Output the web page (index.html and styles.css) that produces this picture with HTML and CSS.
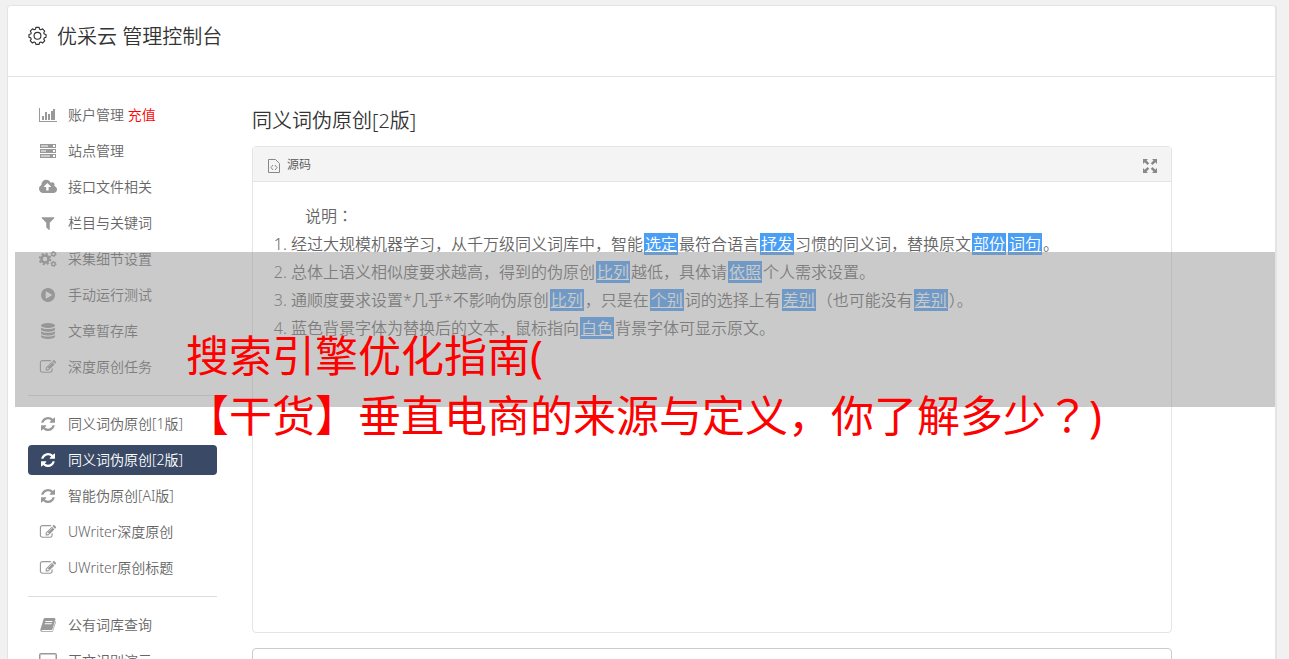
FILE: index.html
```html
<!DOCTYPE html>
<html lang="zh-CN">
<head>
  <meta charset="UTF-8">
  <meta name="viewport" content="width=device-width, initial-scale=1.0">
  <title>优采云 管理控制台</title>

  <link rel="stylesheet" href="styles.css">
</head>
<body>
  <!-- shared icons -->
  <svg class="sprite" aria-hidden="true">
    <symbol id="i-refresh" viewBox="128 18 1536 1756"><path d="M1639 1056q0 5-1 7-64 268-268 434.5t-478 166.5q-146 0-282.5-55t-243.5-157l-129 129q-19 19-45 19t-45-19-19-45v-448q0-26 19-45t45-19h448q26 0 45 19t19 45-19 45l-137 137q71 66 161 102t187 36q134 0 250-65t186-179q11-17 53-117 8-23 30-23h192q13 0 22.5 9.5t9.5 22.5zm25-800v448q0 26-19 45t-45 19h-448q-26 0-45-19t-19-45 19-45l138-138q-148-137-349-137-134 0-250 65t-186 179q-11 17-53 117-8 23-30 23h-199q-13 0-22.5-9.5t-9.5-22.5v-7q65-268 270-434.5t480-166.5q146 0 284 55.5t245 156.5l130-129q19-19 45-19t45 19 19 45z"/></symbol>
    <symbol id="i-edit" viewBox="0 18 1792 1756"><path d="M888 1184l116-116-152-152-116 116v56h96v96h56zm440-720q-16-16-33 1l-350 350q-17 17-1 33t33-1l350-350q17-17 1-33zm80 594v190q0 119-84.5 203.5t-203.5 84.5h-832q-119 0-203.5-84.5t-84.5-203.5v-832q0-119 84.5-203.5t203.5-84.5h832q63 0 117 25 15 7 18 23 3 17-9 29l-49 49q-14 14-32 8-23-6-45-6h-832q-66 0-113 47t-47 113v832q0 66 47 113t113 47h832q66 0 113-47t47-113v-126q0-13 9-22l64-64q15-15 35-7t20 29zm-96-738l288 288-672 672h-288v-288zm444 132l-92 92-288-288 92-92q28-28 68-28t68 28l152 152q28 28 28 68t-28 68z"/></symbol>
  </svg>

  <div class="wrapper">
    <div class="header">
      <svg class="gear" viewBox="0 0 20 20" aria-hidden="true">
        <path d="M8.3 1.5h3.4l.5 2 1.3.5 1.8-1 2.3 2.3-1 1.8.5 1.3 1.9.5v3l-1.9.6-.5 1.3 1 1.8-2.3 2.3-1.8-1-1.3.5-.5 1.9H8.3l-.5-1.9-1.3-.5-1.8 1-2.3-2.3 1-1.8-.5-1.3L1 11.9v-3l1.9-.5.5-1.3-1-1.8 2.3-2.3 1.8 1 1.3-.5z"/>
        <circle cx="10" cy="10.3" r="3.6"/>
      </svg>
      <h1>优采云 管理控制台</h1>
    </div>

    <div class="content">
      <div class="sidebar">
        <ul class="menu">
          <li><a href="#"><svg viewBox="0 0 18 14"><path d="M0 0h1v13h17v1H0zM3 8h2v4H3zM6 4h2v8H6zM9 6h2v6H9zM12 3h2v9h-2zM14 1h2v11h-2z"/></svg>账户管理 <span class="red">充值</span></a></li>
          <li><a href="#"><svg viewBox="0 0 18 14"><path fill-rule="evenodd" d="M1 0h16v4H1zM1 5h16v4H1zM1 10h16v4H1zM2 1v2h7V1zM2 6v2h5V6zM2 11v2h9v-2zM14 1v2h2V1zM14 6v2h2V6zM14 11v2h2v-2z"/><path opacity=".5" d="M2 1h12v2H2zM2 6h12v2H2zM2 11h12v2H2z"/></svg>站点管理</a></li>
          <li><a href="#"><svg viewBox="-64 128 1920 1536"><path d="M1216 864q0-14-9-23l-352-352q-9-9-23-9t-23 9l-351 351q-10 12-10 24 0 14 9 23t23 9h224v352q0 13 9.5 22.5t22.5 9.5h192q13 0 22.5-9.5t9.5-22.5v-352h224q13 0 22.5-9.5t9.5-22.5zm640 288q0 159-112.5 271.5t-271.5 112.5h-1088q-185 0-316.5-131.5t-131.5-316.5q0-130 70-240t188-165q-2-30-2-43 0-212 150-362t362-150q156 0 285.5 87t188.5 231q71-62 166-62 106 0 181 75t75 181q0 76-41 138 130 31 213.5 135.5t83.5 238.5z"/></svg>接口文件相关</a></li>
          <li><a href="#"><svg viewBox="128 18 1536 1756"><path d="M1595 295q17 41-14 70l-493 493v742q0 42-39 59-13 5-25 5-27 0-45-19l-256-256q-19-19-19-45v-486l-493-493q-31-29-14-70 17-39 59-39h1280q42 0 59 39z"/></svg>栏目与关键词</a></li>
          <li><a href="#"><svg viewBox="0 0 18 16"><g class="cog"><circle cx="6" cy="8" r="3.5" stroke-width="2.6"/><circle cx="6" cy="8" r="5.3" stroke-width="2" stroke-dasharray="2.1 2.063"/><circle cx="14.5" cy="3" r="1.8" stroke-width="1.4"/><circle cx="14.5" cy="3" r="2.6" stroke-width="1" stroke-dasharray="1.4 1.323"/><circle cx="14.5" cy="13" r="1.8" stroke-width="1.4"/><circle cx="14.5" cy="13" r="2.6" stroke-width="1" stroke-dasharray="1.4 1.323"/></g></svg>采集细节设置</a></li>
          <li><a href="#"><svg viewBox="128 18 1536 1756"><path d="M896 128q209 0 385.5 103t279.5 279.5 103 385.5-103 385.5-279.5 279.5-385.5 103-385.5-103-279.5-279.5-103-385.5 103-385.5 279.5-279.5 385.5-103zm384 823q32-18 32-55t-32-55l-544-320q-31-19-64-1-32 19-32 56v640q0 37 32 56 16 8 32 8 17 0 32-9z"/></svg>手动运行测试</a></li>
          <li><a href="#"><svg viewBox="0 0 14 16"><ellipse cx="7" cy="2.5" rx="7" ry="2.5"/><path d="M0 4.5c2 2 12 2 14 0v2c0 3-14 3-14 0zM0 8.3c2 2 12 2 14 0v2c0 3-14 3-14 0zM0 12c2 2 12 2 14 0v1.5c0 3.3-14 3.3-14 0z"/></svg>文章暂存库</a></li>
          <li><a href="#"><svg><use href="#i-edit"/></svg>深度原创任务</a></li>
        </ul>
        <hr>
        <ul class="menu">
          <li><a href="#"><svg><use href="#i-refresh"/></svg>同义词伪原创[1版]</a></li>
          <li><a href="#" class="active"><svg><use href="#i-refresh"/></svg>同义词伪原创[2版]</a></li>
          <li><a href="#"><svg><use href="#i-refresh"/></svg>智能伪原创[AI版]</a></li>
          <li><a href="#"><svg><use href="#i-edit"/></svg>UWriter深度原创</a></li>
          <li><a href="#"><svg><use href="#i-edit"/></svg>UWriter原创标题</a></li>
        </ul>
        <hr>
        <ul class="menu">
          <li><a href="#"><svg viewBox="-1 -1 18 16"><path fill-rule="evenodd" d="M5 0h9.5q1.2.3.9 1.5L12.5 11q-.4 1-1.4 1H2.5q-1 0-.9.7t.9.5h9.3q.6 0 .8-.7L15.5 3q.7.5.4 1.3L13 13q-.4 1-1.4 1H2.2Q.2 14 .3 11.8L3.500 1.200Q4 0 5 0zM5.500 3l-.3 1h7l.3-1zM4.900 5.300l-.3 1h7l.3-1z"/></svg>公有词库查询</a></li>
          <li><a href="#"><svg viewBox="0 0 18 16"><path fill-rule="evenodd" d="M2 0h14q2 0 2 2v9q0 2-2 2h-5v2h2v1H5v-1h2v-2H2q-2 0-2-2V2q0-2 2-2zM1.5 1.5v8h15v-8z"/></svg>正文识别演示</a></li>
        </ul>
      </div>

      <div class="main">
        <h2>同义词伪原创[2版]</h2>
        <div class="panel">
          <div class="toolbar">
            <button type="button" class="source">
              <svg viewBox="0 0 12 14" aria-hidden="true"><path d="M.5.5h7l4 4v9H.5zM5 6L3 8.500 5 11M7 6l2 2.500L7 11"/></svg>
              源码
            </button>
            <button type="button" class="expand" aria-label="全屏">
              <svg viewBox="0 0 14 14" aria-hidden="true"><path d="M0 0h5L3.500 1.500 6.200 4.200 4.500 6 1.700 3.300 0 5zM14 0v5l-1.700-1.700L9.500 6 7.800 4.200l2.700-2.700L9 0zM0 14V9l1.700 1.700L4.500 8l1.700 1.800-2.700 2.700L5 14zM14 14H9l1.500-1.500-2.700-2.700L9.500 8l2.800 2.700L14 9z"/></svg>
            </button>
          </div>
          <div class="editor">
            <p>说明<span class="mid" lang="zh-TW">：</span></p>
            <ol>
              <li>经过大规模机器学习，从千万级同义词库中，智能<u>选定</u>最符合语言<u>抒发</u>习惯的同义词，替换原文<u>部份</u><u>词句</u>。</li>
              <li>总体上语义相似度要求越高，得到的伪原创<u>比列</u>越低，具体请<u>依照</u>个人需求设置。</li>
              <li>通顺度要求设置*几乎*不影响伪原创<u>比列</u>，只是在<u>个别</u>词的选择上有<u>差别</u>（也可能没有<u>差别</u>）。</li>
              <li>蓝色背景字体为替换后的文本，鼠标指向<u>白色</u>背景字体可显示原文。</li>
            </ol>
          </div>
        </div>
        <textarea class="result" aria-label="结果"></textarea>
      </div>
    </div>
  </div>

  <div class="banner">
    <p>搜索引擎优化指南(<br>【干货】垂直电商的来源与定义，你了解多少<span class="mid" lang="zh-TW">？</span>)</p>
  </div>
</body>
</html>
```
FILE: styles.css
```css
* {
  box-sizing: border-box;
}
body {
  font-family: "Noto Sans", "Noto Sans CJK SC", sans-serif;
  font-size: 14px;
  font-weight: 350;
  margin: 0;
  padding: 5px 12px 0 7px;
  height: 100vh;
  overflow: hidden;
  background-color: #f1f1f1;
  color: #666;
}
h1,
h2,
p,
ul,
ol {
  margin: 0;
  padding: 0;
  font-weight: 350;
}
.sprite {
  display: none;
}
/* full-width punctuation centred in its cell */
.mid {
  font-family: "Noto Sans", "Noto Sans CJK TC", sans-serif;
}
.wrapper {
  background-color: white;
  border: 1px solid #e4e4e4;
  border-right-width: 2px;
  border-radius: 4px;
}
.header {
  display: flex;
  align-items: center;
  gap: 10px;
  height: 71px;
  padding: 0 20px 8px;
  border-bottom: 1px solid #e4e4e4;
  color: #333;
}
.header h1 {
  font-size: 20px;
  line-height: 30px;
}
.gear {
  width: 19px;
  height: 19px;
  margin-bottom: 4px;
  fill: none;
  stroke: #333;
  stroke-width: 1.2;
  stroke-linejoin: round;
}

/* side menu */
.content {
  display: flex;
  gap: 35px;
  padding: 23px 20px;
}
.sidebar {
  flex: 0 0 189px;
}
.menu {
  list-style: none;
}
.menu li {
  margin-bottom: 6px;
}
.menu a {
  display: flex;
  align-items: center;
  height: 30px;
  padding: 0 0 2px 11px;
  border-radius: 4px;
  color: #666;
  text-decoration: none;
  white-space: pre;
}
.menu svg {
  width: 18px;
  height: 16px;
  margin: 2px 11px 0 0;
  fill: #999;
}
.menu .cog {
  fill: none;
  stroke: #999;
}
.menu a.active {
  background-color: #3a4a66;
  color: white;
}
.menu a.active svg {
  fill: white;
}
.red {
  color: red;
}
hr {
  margin: 13px 0;
  border: 0;
  border-top: 1px solid #ddd;
}

/* editor */
.main {
  flex: 1;
  max-width: 920px;
}
.main h2 {
  font-size: 20px;
  line-height: 30px;
  margin: 6px 0 10px;
  color: #333;
}
.panel {
  border: 1px solid #e4e4e4;
  border-radius: 4px;
}
.toolbar {
  display: flex;
  justify-content: space-between;
  align-items: center;
  height: 35px;
  padding: 0 14px 0 15px;
  background-color: #f4f4f4;
  border-bottom: 1px solid #e4e4e4;
}
.toolbar button {
  display: flex;
  align-items: center;
  padding: 0;
  border: 0;
  background: none;
  font: inherit;
  font-size: 12px;
  color: #555;
}
.toolbar svg {
  height: 14px;
  margin-top: 3px;
}
.source {
  gap: 7px;
}
.source svg {
  width: 12px;
  fill: none;
  stroke: #888;
}
.expand svg {
  width: 14px;
  fill: #888;
}
.editor {
  min-height: 450px;
  padding: 20px;
  font-size: 16px;
  line-height: 28px;
}
.editor p {
  text-indent: 2em;
}
.editor ol {
  padding-left: 18px;
}
.editor u {
  margin: 0 1px;
  padding: 0 1px;
  background-color: #4a9ff5;
  color: white;
}
.result {
  display: block;
  width: 100%;
  height: 120px;
  margin-top: 15px;
  border: 1px solid #ccc;
  border-radius: 4px;
  resize: none;
}

/* headline over the page */
.banner {
  position: absolute;
  top: 252px;
  left: 15px;
  right: 14px;
  height: 155px;
  padding: 74px 0 0 171px;
  background-color: rgba(150, 150, 150, 0.5);
  color: red;
  font-size: 43px;
  line-height: 60px;
  white-space: nowrap;
}
.banner p {
  font-weight: 400;
}
```
